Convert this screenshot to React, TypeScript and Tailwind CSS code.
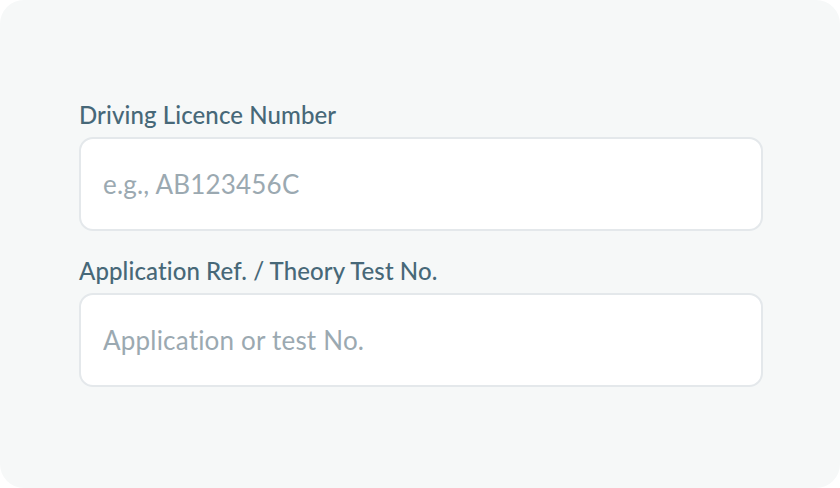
export default function App() {
  const fields = [
    { label: "Driving Licence Number", placeholder: "e.g., AB123456C" },
    { label: "Application Ref. / Theory Test No.", placeholder: "Application or test No." },
  ]

  return (
    <div className="w-[840px] h-[488px] bg-white font-['Lato',sans-serif] [font-variant-ligatures:none]">
      <div className="w-full h-full rounded-[24px] bg-[#f6f8f8] flex flex-col justify-center pl-[79px] pr-[77px] gap-[26px]">
        {fields.map((f) => (
          <label key={f.label} className="flex flex-col gap-[8px]">
            <span className="text-[24px] leading-[28px] font-medium tracking-[0.1px] text-[#476878]">{f.label}</span>
            <input
              type="text"
              placeholder={f.placeholder}
              className="h-[94px] w-full rounded-[14px] border-2 border-[#e4e8eb] bg-white px-[22px] text-[26px] tracking-[0.2px] text-[#476878] placeholder:text-[#9ba9b1] outline-none [font-variant-ligatures:none]"
            />
          </label>
        ))}
      </div>
    </div>
  )
}
